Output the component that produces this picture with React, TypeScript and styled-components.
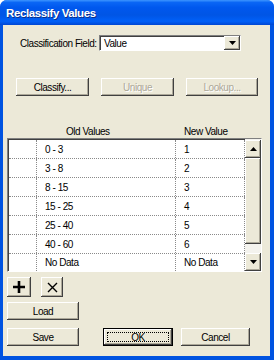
import React from 'react';
import styled, { createGlobalStyle, css } from 'styled-components';

const GlobalStyle = createGlobalStyle`
    html, body {
        margin: 0;
        padding: 0;
        background: #ffffff;
    }
    body {
        font-family: "Liberation Sans", Arial, sans-serif;
        font-size: 10px;
        letter-spacing: -0.45px;
        color: #000;
    }
`;

const Window = styled.div`
    width: 274px;
    height: 360px;
    display: flex;
    flex-direction: column;
    box-sizing: border-box;
    background: #0053e1;
    border-radius: 7px 7px 0 0;
    overflow: hidden;
`;

const TitleBar = styled.div`
    height: 25px;
    flex: none;
    display: flex;
    align-items: center;
    padding-left: 6px;
    background: linear-gradient(
        to bottom,
        #3d95ff 0%,
        #0a66f5 10%,
        #0058ee 30%,
        #0055e5 60%,
        #0060f8 85%,
        #0046d2 100%
    );
    color: #fff;
    font-family: "Liberation Sans", Arial, sans-serif;
    font-weight: bold;
    font-size: 11.5px;
    letter-spacing: -0.4px;
    text-shadow: 1px 1px #0b2f8a;
`;

const Frame = styled.div`
    flex: 1;
    margin: 0 4px 4px 3px;
    background: #ece9d8;
    padding: 10px 8px 0 4px;
    display: flex;
    flex-direction: column;
`;

const FieldRow = styled.div`
    display: flex;
    align-items: center;
    padding-left: 13px;
    height: 16px;
`;

const Label = styled.span`
    width: 79px;
    white-space: nowrap;
`;

const Select = styled.div`
    width: 142px;
    height: 16px;
    box-sizing: border-box;
    background: #fff;
    border-top: 1px solid #808080;
    border-left: 1px solid #808080;
    border-right: 1px solid #fff;
    border-bottom: 1px solid #fff;
    box-shadow: inset 1px 1px #404040;
    display: flex;
    align-items: center;
    justify-content: space-between;
    padding-left: 4px;
`;

const raised = css`
    background: #ece9d8;
    box-shadow: inset -1px -1px #404040, inset 1px 1px #ffffff, inset -2px -2px #aca899;
`;

const ArrowBox = styled.div`
    ${raised};
    width: 16px;
    height: 14px;
    display: flex;
    align-items: center;
    justify-content: center;
`;

const ButtonRow = styled.div`
    display: flex;
    margin-top: 27px;
    padding-left: 9px;
    gap: 12px;
`;

const Button = styled.div<{ $w: number; $disabled?: boolean; $default?: boolean }>`
    ${raised};
    width: ${(p) => p.$w}px;
    height: 18px;
    box-sizing: border-box;
    display: flex;
    align-items: center;
    justify-content: center;
    color: ${(p) => (p.$disabled ? '#aca899' : '#000')};
    text-shadow: ${(p) => (p.$disabled ? '1px 1px #ffffff' : 'none')};
    position: relative;
    ${(p) =>
        p.$default &&
        css`
            box-shadow: inset 0 0 0 1px #000, inset -2px -2px #404040, inset 2px 2px #ffffff,
                inset -3px -3px #aca899;
            &::after {
                content: '';
                position: absolute;
                inset: 4px;
                border: 1px dotted #000;
            }
        `}
`;

const HeaderRow = styled.div`
    display: grid;
    grid-template-columns: 59px 118px auto;
    margin-top: 28px;
    height: 14px;
    align-items: center;
`;

const Header = styled.span<{ $col: number }>`
    grid-column: ${(p) => p.$col};
    white-space: nowrap;
`;

const Grid = styled.div`
    width: 255px;
    height: 134px;
    box-sizing: border-box;
    border-top: 1px solid #808080;
    border-left: 1px solid #808080;
    border-right: 1px solid #ffffff;
    border-bottom: 1px solid #ffffff;
    box-shadow: inset 1px 1px #404040;
    display: flex;
    background: #ffffff;
`;

const Rows = styled.div`
    flex: 1;
    display: flex;
    flex-direction: column;
    padding-left: 1px;
    padding-top: 1px;
`;

const Row = styled.div`
    display: grid;
    grid-template-columns: 28px 139px 69px;
    height: 19px;
    box-sizing: border-box;
    border-bottom: 1px dotted #8a8a8a;
    &:last-child {
        border-bottom: none;
        height: 17px;
    }
`;

const Cell = styled.div<{ $first?: boolean }>`
    display: flex;
    align-items: center;
    padding-left: ${(p) => (p.$first ? 0 : 8)}px;
    border-right: 1px dotted #8a8a8a;
    white-space: nowrap;
`;

const ScrollBar = styled.div`
    width: 16px;
    display: flex;
    flex-direction: column;
    background: #f4f3ee;
    padding-top: 1px;
`;

const ScrollButton = styled.div`
    ${raised};
    width: 16px;
    height: 18px;
    flex: none;
    display: flex;
    align-items: center;
    justify-content: center;
`;

const Thumb = styled.div`
    ${raised};
    width: 16px;
    height: 86px;
    flex: none;
`;

const Track = styled.div`
    flex: 1;
`;

const IconRow = styled.div`
    display: flex;
    gap: 10px;
    margin-top: 5px;
`;

const IconButton = styled.div<{ $w: number }>`
    ${raised};
    width: ${(p) => p.$w}px;
    height: 20px;
    display: flex;
    align-items: center;
    justify-content: center;
`;

const ActionRow = styled.div<{ $top: number }>`
    display: flex;
    margin-top: ${(p) => p.$top}px;
`;

const Spacer = styled.div<{ $w: number }>`
    width: ${(p) => p.$w}px;
    flex: none;
`;

const Triangle = ({ up }: { up?: boolean }) => (
    <svg width="7" height="4" viewBox="0 0 7 4">
        <path d={up ? 'M3.5 0 L7 4 L0 4 Z' : 'M0 0 L7 0 L3.5 4 Z'} fill="#000" />
    </svg>
);

const rows = [
    ['0 - 3', '1'],
    ['3 - 8', '2'],
    ['8 - 15', '3'],
    ['15 - 25', '4'],
    ['25 - 40', '5'],
    ['40 - 60', '6'],
    ['No Data', 'No Data'],
];

export default function App() {
    return (
        <>
            <GlobalStyle />
            <Window>
                <TitleBar>Reclassify Values</TitleBar>
                <Frame>
                    <FieldRow>
                        <Label>Classification Field:</Label>
                        <Select>
                            <span>Value</span>
                            <ArrowBox>
                                <Triangle />
                            </ArrowBox>
                        </Select>
                    </FieldRow>

                    <ButtonRow>
                        <Button $w={73}>Classify...</Button>
                        <Button $w={73} $disabled>
                            Unique
                        </Button>
                        <Button $w={72} $disabled>
                            Lookup...
                        </Button>
                    </ButtonRow>

                    <HeaderRow>
                        <Header $col={2}>Old Values</Header>
                        <Header $col={3}>New Value</Header>
                    </HeaderRow>

                    <Grid>
                        <Rows>
                            {rows.map(([oldV, newV]) => (
                                <Row key={oldV}>
                                    <Cell $first />
                                    <Cell>{oldV}</Cell>
                                    <Cell>{newV}</Cell>
                                </Row>
                            ))}
                        </Rows>
                        <ScrollBar>
                            <ScrollButton>
                                <Triangle up />
                            </ScrollButton>
                            <Thumb />
                            <Track />
                            <ScrollButton>
                                <Triangle />
                            </ScrollButton>
                        </ScrollBar>
                    </Grid>

                    <IconRow>
                        <IconButton $w={24}>
                            <svg width="12" height="12" viewBox="0 0 12 12">
                                <path d="M6 0 V12 M0 6 H12" stroke="#000" strokeWidth="2.6" />
                            </svg>
                        </IconButton>
                        <IconButton $w={22}>
                            <svg width="11" height="11" viewBox="0 0 11 11">
                                <path d="M1 1 L10 10 M10 1 L1 10" stroke="#000" strokeWidth="1.4" />
                            </svg>
                        </IconButton>
                    </IconRow>

                    <ActionRow $top={5}>
                        <Button $w={72}>Load</Button>
                    </ActionRow>

                    <ActionRow $top={8}>
                        <Button $w={72}>Save</Button>
                        <Spacer $w={24} />
                        <Button $w={70} $default>
                            OK
                        </Button>
                        <Spacer $w={8} />
                        <Button $w={69}>Cancel</Button>
                    </ActionRow>
                </Frame>
            </Window>
        </>
    );
}
